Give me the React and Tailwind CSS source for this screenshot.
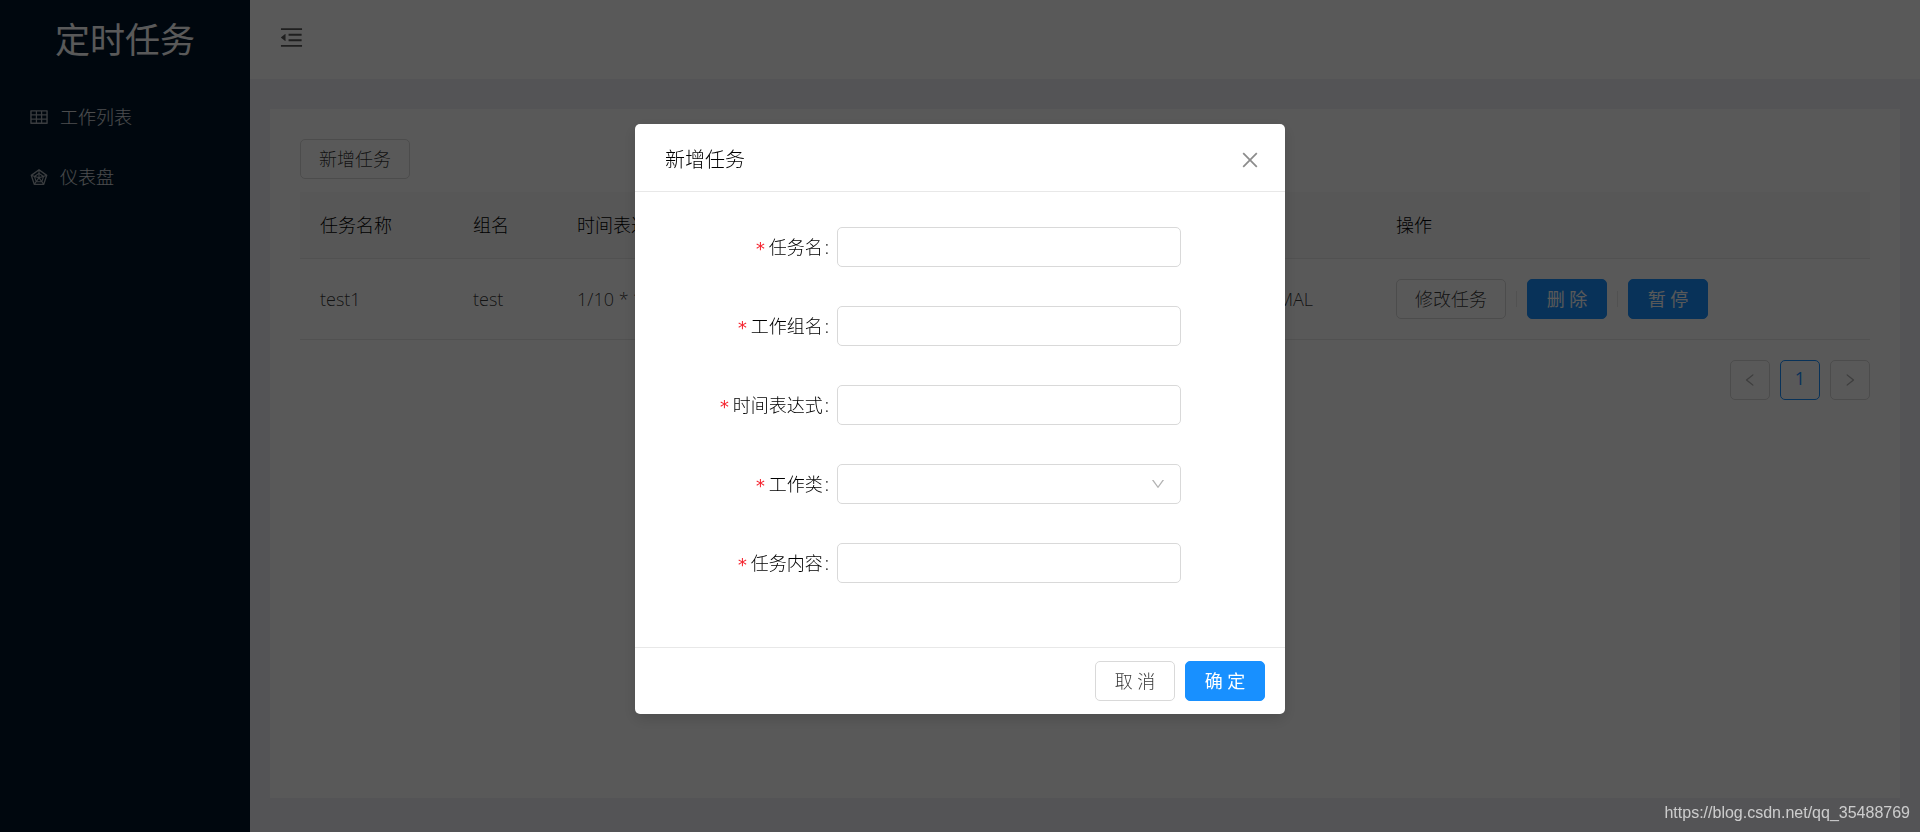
import React, { useState } from "react";
import {
  AiOutlineClose,
  AiOutlineDown,
  AiOutlineLeft,
  AiOutlineMenuFold,
  AiOutlineRadarChart,
  AiOutlineRight,
  AiOutlineTable,
} from "react-icons/ai";

const menu = [
  { key: "jobs", label: "工作列表", Icon: AiOutlineTable },
  { key: "dashboard", label: "仪表盘", Icon: AiOutlineRadarChart },
];

const jobs = [
  { name: "test1", group: "test", cron: "1/10 * * * * ?", state: "NORMAL" },
];

const fields = [
  { name: "jobName", label: "任务名", type: "input" },
  { name: "jobGroup", label: "工作组名", type: "input" },
  { name: "cron", label: "时间表达式", type: "input" },
  { name: "jobClass", label: "工作类", type: "select" },
  { name: "content", label: "任务内容", type: "input" },
];

// =================== BUTTON ===================
function Button({ primary, small, children, ...rest }) {
  return (
    <button
      type="button"
      className={`h-10 rounded-[5px] border text-lg leading-none whitespace-nowrap ${
        small ? "w-20" : "w-[110px]"
      } ${
        primary
          ? "border-[#1890ff] bg-[#1890ff] font-normal text-white"
          : "border-[#d9d9d9] bg-white text-black/80"
      }`}
      {...rest}
    >
      {children}
    </button>
  );
}

function Divider() {
  return <span className="mx-[10px] h-4 w-px bg-[#e8e8e8]" />;
}

// =================== SIDEBAR ===================
function Sidebar() {
  return (
    <aside className="w-[250px] shrink-0 bg-[#001529]">
      <h1 className="h-20 text-center text-[35px] leading-[80px] font-normal text-white">定时任务</h1>
      <nav className="flex flex-col gap-[10px] pt-3">
        {menu.map(({ key, label, Icon }) => (
          <a key={key} href={`#${key}`} className="flex h-[50px] items-center gap-[11px] pl-[29px] text-lg text-white/85">
            <Icon size={20} className="text-white/65" />
            {label}
          </a>
        ))}
      </nav>
    </aside>
  );
}

// =================== TABLE ===================
function JobTable() {
  return (
    <table className="mt-[13px] w-full table-fixed border-collapse text-left text-lg">
      <thead className="bg-[#fafafa] text-black">
        <tr className="h-[66px] border-b border-[#e8e8e8]">
          <th className="w-[153px] px-5 font-light">任务名称</th>
          <th className="w-[104px] px-5 font-light">组名</th>
          <th className="px-5 font-light">时间表达式</th>
          <th className="w-[156px] px-5 font-light">状态</th>
          <th className="w-[494px] px-5 font-light">操作</th>
        </tr>
      </thead>
      <tbody className="text-black/80">
        {jobs.map((job) => (
          <tr key={job.name} className="h-[81px] border-b border-[#e8e8e8]">
            <td className="px-5">{job.name}</td>
            <td className="px-5">{job.group}</td>
            <td className="px-5">{job.cron}</td>
            <td className="px-5">{job.state}</td>
            <td className="px-5">
              <div className="flex items-center">
                <Button>修改任务</Button>
                <Divider />
                <Button primary small>删 除</Button>
                <Divider />
                <Button primary small>暂 停</Button>
              </div>
            </td>
          </tr>
        ))}
      </tbody>
    </table>
  );
}

function Pagination() {
  const arrow =
    "flex size-10 items-center justify-center rounded-[5px] border border-[#d9d9d9] text-black/30";
  return (
    <div className="mt-5 flex justify-end gap-[10px]">
      <button type="button" aria-label="上一页" className={arrow}>
        <AiOutlineLeft size={16} />
      </button>
      <button type="button" className="size-10 rounded-[5px] border border-[#1890ff] pb-1 text-lg leading-none font-normal text-[#1890ff]">
        1
      </button>
      <button type="button" aria-label="下一页" className={arrow}>
        <AiOutlineRight size={16} />
      </button>
    </div>
  );
}

// =================== MODAL ===================
function JobModal({ onClose }) {
  const [values, setValues] = useState({});
  const control = "h-10 w-full rounded-[5px] border border-[#d9d9d9] bg-white px-3 text-lg text-black/65";

  const change = (e) => setValues({ ...values, [e.target.name]: e.target.value });

  return (
    <div className="fixed inset-0 flex items-start justify-center bg-black/65 pt-[124px]">
      <div
        role="dialog"
        aria-labelledby="modal-title"
        className="w-full max-w-[650px] rounded-[5px] bg-white shadow-[0_5px_15px_rgba(0,0,0,0.15)]"
      >
        <div className="flex h-[68px] items-center justify-between border-b border-[#e8e8e8] pt-1 pr-6 pl-[30px]">
          <h2 id="modal-title" className="text-xl font-light text-black">新增任务</h2>
          <button type="button" aria-label="关闭" onClick={onClose} className="text-black/45">
            <AiOutlineClose size={22} />
          </button>
        </div>

        <form className="flex flex-col gap-[39px] px-[30px] pt-[35px] pb-16">
          {fields.map((f) => (
            <div key={f.name} className="grid grid-cols-[7fr_14fr_3fr] items-center">
              <label htmlFor={f.name} className="flex items-center justify-end pr-2 text-lg text-black">
                <span className="mr-[3px] pt-1 font-['DejaVu_Sans_Mono',monospace] font-normal text-[#f5222d]">*</span>
                {f.label}
                <span className="ml-[2px]">:</span>
              </label>
              {f.type === "select" ? (
                <div className="relative">
                  <select
                    id={f.name}
                    name={f.name}
                    value={values[f.name] || ""}
                    onChange={change}
                    className={`${control} appearance-none`}
                  >
                    <option value=""></option>
                  </select>
                  <AiOutlineDown size={16} className="pointer-events-none absolute top-3 right-[15px] text-black/30" />
                </div>
              ) : (
                <input
                  id={f.name}
                  name={f.name}
                  type="text"
                  value={values[f.name] || ""}
                  onChange={change}
                  className={control}
                />
              )}
            </div>
          ))}
        </form>

        <div className="flex justify-end gap-[10px] border-t border-[#e8e8e8] px-5 py-[13px]">
          <Button small onClick={onClose}>取 消</Button>
          <Button primary small>确 定</Button>
        </div>
      </div>
    </div>
  );
}

export default function App() {
  const [open, setOpen] = useState(true);

  return (
    <div className="flex min-h-screen bg-[#f0f0f5] font-['Open_Sans','Noto_Sans_CJK_SC',sans-serif] font-light">
      <Sidebar />

      <div className="flex flex-1 flex-col">
        <header className="flex h-[79px] items-center bg-white px-7 pb-1">
          <button type="button" aria-label="收起菜单" className="text-black/65">
            <AiOutlineMenuFold size={27} />
          </button>
        </header>

        <main className="mx-5 mt-[30px] mb-[34px] flex-1 bg-white p-[30px]">
          <Button onClick={() => setOpen(true)}>新增任务</Button>
          <JobTable />
          <Pagination />
        </main>
      </div>

      {open && <JobModal onClose={() => setOpen(false)} />}

      <footer className="fixed right-[10px] bottom-[7px] font-['Liberation_Sans',sans-serif] text-base font-normal text-white/70">
        https://blog.csdn.net/qq_35488769
      </footer>
    </div>
  );
}
